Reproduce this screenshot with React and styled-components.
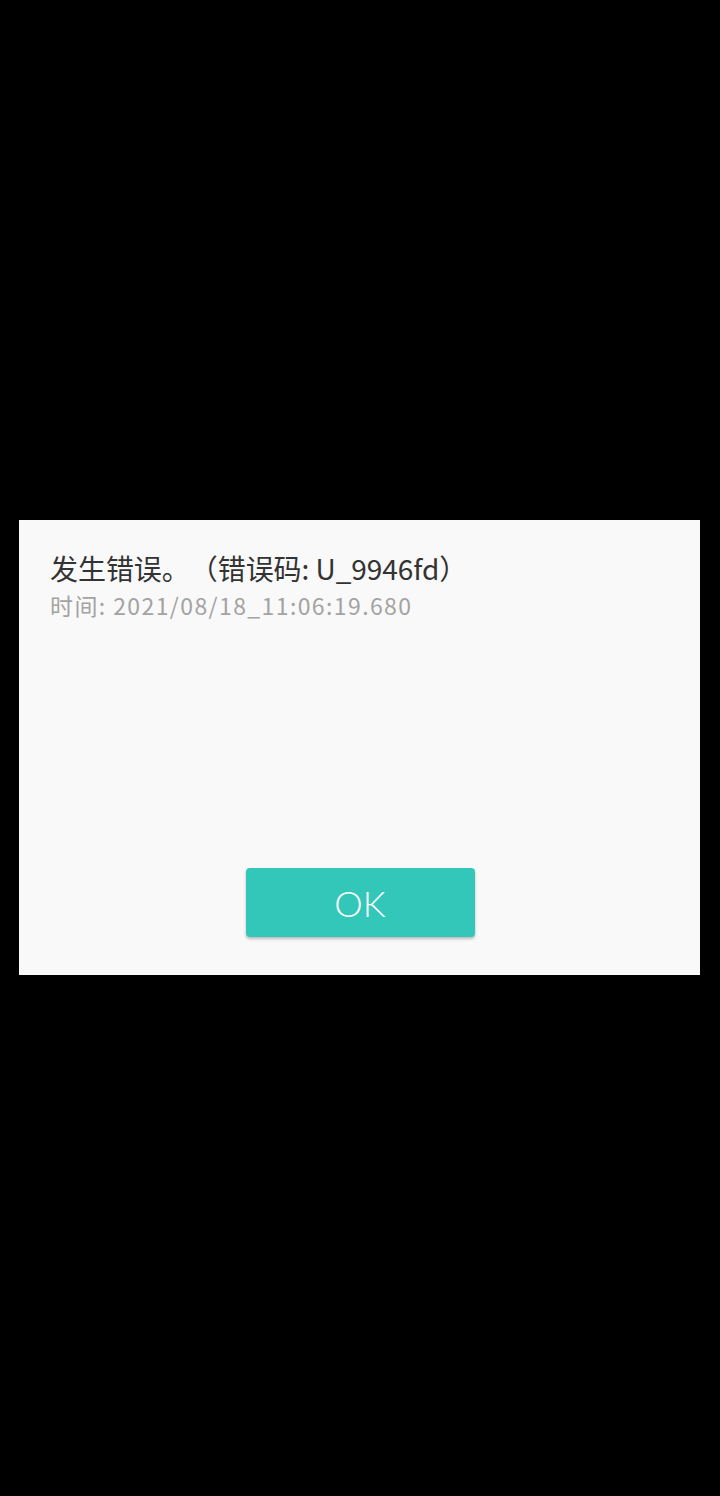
import React from "react";
import styled, { createGlobalStyle } from "styled-components";

const Global = createGlobalStyle`
  html, body { margin: 0; padding: 0; background: #000; }
  body { font-family: "Noto Sans", "Noto Sans CJK SC", sans-serif; }
`;

const Screen = styled.div`
  width: 720px;
  height: 1496px;
  background: #000;
  display: flex;
  flex-direction: column;
  padding: 520px 20px 0 19px;
  box-sizing: border-box;
`;

const Dialog = styled.div`
  width: 681px;
  height: 455px;
  background: #f9f9f9;
  display: flex;
  flex-direction: column;
  box-sizing: border-box;
  padding: 28px 31px 38px;
`;

const Title = styled.div`
  font-family: "Noto Sans CJK SC", "Noto Sans", sans-serif;
  font-size: 28px;
  line-height: 40px;
  color: #333;
  letter-spacing: -0.05px;
  text-spacing-trim: space-all;
  white-space: nowrap;
`;

const Meta = styled.div`
  font-family: "Noto Sans CJK SC", "Noto Sans", sans-serif;
  font-size: 23px;
  line-height: 34px;
  color: #a3a3a3;
  letter-spacing: 1.4px;
  white-space: nowrap;
`;

const Actions = styled.div`
  margin-top: auto;
  display: flex;
  justify-content: center;
  padding-left: 1px;
`;

const Button = styled.button`
  width: 229px;
  height: 69px;
  border: none;
  border-radius: 4px;
  background: #33c7b9;
  color: #fff;
  font-family: "Lato", sans-serif;
  font-weight: 300;
  font-size: 36px;
  box-shadow: 0 2px 3px rgba(0, 0, 0, 0.25);
  padding: 0;
`;

export default function App() {
  return (
    <>
      <Global />
      <Screen>
        <Dialog>
          <Title>发生错误。（错误码: U_9946fd）</Title>
          <Meta>时间: 2021/08/18_11:06:19.680</Meta>
          <Actions>
            <Button>OK</Button>
          </Actions>
        </Dialog>
      </Screen>
    </>
  );
}
